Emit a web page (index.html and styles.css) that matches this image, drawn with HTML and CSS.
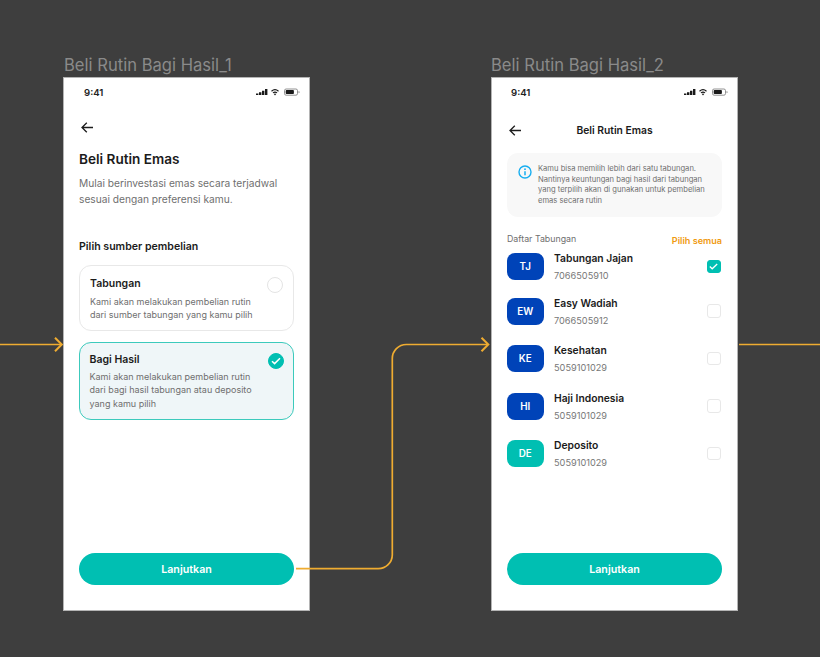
FILE: index.html
```html
<!DOCTYPE html>
<html lang="id">
<head>
<meta charset="utf-8">
<title>Beli Rutin Emas</title>
<link rel="stylesheet" href="styles.css">
</head>
<body>
<div class="canvas">
  <div class="frame-title title-one">Beli Rutin Bagi Hasil_1</div>
  <section class="frame frame-one">
    <div class="status">
      <span class="time">9:41</span>
      <svg class="status-icons" width="45" height="8" viewBox="0 0 45 8"><path d="M0 5.500h2.400V7H0zM3 4.300h2.400V7H3zM6 2.800h2.400V7H6zM9 1h2.400v6H9z" fill="#1a1a1a"/><path d="M15.500 3.200a5.400 5.400 0 0 1 7 0M17 4.900a3.200 3.200 0 0 1 4 0" fill="none" stroke="#1a1a1a" stroke-width="1.200"/><path d="M19 7.400l-1.200-1.300a1.700 1.700 0 0 1 2.400 0z" fill="#1a1a1a"/><rect x="28.500" y="1" width="13" height="6.200" rx="1.600" fill="none" stroke="#777" stroke-width=".8"/><rect x="29.700" y="2.100" width="8.200" height="4" rx=".8" fill="#1a1a1a"/><path d="M42.600 3v2.200c.6-.2 1-.6 1-1.100s-.4-.9-1-1.100z" fill="#777"/></svg>
    </div>
    <svg class="back back-one" width="12" height="11" viewBox="0 0 12 11"><path d="M12 5.500H1M5.800.7 1 5.500l4.800 4.800" fill="none" stroke="#1c1c1c" stroke-width="1.300"/></svg>
    <h1 class="page-title">Beli Rutin Emas</h1>
    <p class="lead">Mulai berinvestasi emas secara terjadwal sesuai dengan preferensi kamu.</p>
    <h2 class="section-title">Pilih sumber pembelian</h2>
    <div class="option">
      <div class="option-copy">
        <h3>Tabungan</h3>
        <p>Kami akan melakukan pembelian rutin<br>dari sumber tabungan yang kamu pilih</p>
      </div>
      <span class="radio"></span>
    </div>
    <div class="option selected">
      <div class="option-copy">
        <h3>Bagi Hasil</h3>
        <p>Kami akan melakukan pembelian rutin<br>dari bagi hasil tabungan atau deposito<br>yang kamu pilih</p>
      </div>
      <span class="radio on"><svg width="10" height="8" viewBox="0 0 10 8"><path d="M1 4.200 3.600 6.600 9 1.200" fill="none" stroke="#fff" stroke-width="1.500"/></svg></span>
    </div>
    <button class="cta">Lanjutkan</button>
  </section>

  <div class="frame-title title-two">Beli Rutin Bagi Hasil_2</div>
  <section class="frame frame-two">
    <div class="status">
      <span class="time">9:41</span>
      <svg class="status-icons" width="45" height="8" viewBox="0 0 45 8"><path d="M0 5.500h2.400V7H0zM3 4.300h2.400V7H3zM6 2.800h2.400V7H6zM9 1h2.400v6H9z" fill="#1a1a1a"/><path d="M15.500 3.200a5.400 5.400 0 0 1 7 0M17 4.900a3.200 3.200 0 0 1 4 0" fill="none" stroke="#1a1a1a" stroke-width="1.200"/><path d="M19 7.400l-1.200-1.300a1.700 1.700 0 0 1 2.400 0z" fill="#1a1a1a"/><rect x="28.500" y="1" width="13" height="6.200" rx="1.600" fill="none" stroke="#777" stroke-width=".8"/><rect x="29.700" y="2.100" width="8.200" height="4" rx=".8" fill="#1a1a1a"/><path d="M42.600 3v2.200c.6-.2 1-.6 1-1.100s-.4-.9-1-1.100z" fill="#777"/></svg>
    </div>
    <header class="nav">
      <svg class="back" width="12" height="11" viewBox="0 0 12 11"><path d="M12 5.500H1M5.800.7 1 5.500l4.800 4.800" fill="none" stroke="#1c1c1c" stroke-width="1.300"/></svg>
      <span class="nav-title">Beli Rutin Emas</span>
    </header>
    <div class="notice">
      <svg class="info" width="14" height="14" viewBox="0 0 14 14"><circle cx="7" cy="7" r="6" fill="none" stroke="#17aef0" stroke-width="1.400"/><path d="M7 6.300v3.900" stroke="#17aef0" stroke-width="1.500"/><circle cx="7" cy="4.200" r=".9" fill="#17aef0"/></svg>
      <p>Kamu bisa memilih lebih dari satu tabungan. Nantinya keuntungan bagi hasil dari tabungan yang terpilih akan di gunakan untuk pembelian emas secara rutin</p>
    </div>
    <div class="list-head">
      <span class="list-label">Daftar Tabungan</span>
      <span class="select-all">Pilih semua</span>
    </div>
    <ul class="accounts">
      <li class="account first">
        <span class="badge">TJ</span>
        <div class="account-copy"><strong>Tabungan Jajan</strong><span>7066505910</span></div>
        <span class="check on"><svg width="9" height="7" viewBox="0 0 9 7"><path d="M.8 3.600 3.200 5.800 8.200 1" fill="none" stroke="#fff" stroke-width="1.300"/></svg></span>
      </li>
      <li class="account">
        <span class="badge">EW</span>
        <div class="account-copy"><strong>Easy Wadiah</strong><span>7066505912</span></div>
        <span class="check"></span>
      </li>
      <li class="account">
        <span class="badge">KE</span>
        <div class="account-copy"><strong>Kesehatan</strong><span>5059101029</span></div>
        <span class="check"></span>
      </li>
      <li class="account">
        <span class="badge">HI</span>
        <div class="account-copy"><strong>Haji Indonesia</strong><span>5059101029</span></div>
        <span class="check"></span>
      </li>
      <li class="account">
        <span class="badge teal">DE</span>
        <div class="account-copy"><strong>Deposito</strong><span>5059101029</span></div>
        <span class="check"></span>
      </li>
    </ul>
    <button class="cta">Lanjutkan</button>
  </section>

  <svg class="wires" width="820" height="657" viewBox="0 0 820 657">
    <g fill="none" stroke="#efac31" stroke-width="1.700">
      <path d="M0 344.500H61"/>
      <path d="M55 337.700l6.800 6.800-6.800 6.800" stroke-width="2"/>
      <path d="M296 568.700H378a14 14 0 0 0 14.300-14V358.500a14 14 0 0 1 14-14H488"/>
      <path d="M481.500 337.700l6.800 6.800-6.800 6.800" stroke-width="2"/>
      <path d="M739 344.500H820"/>
    </g>
  </svg>
</div>
</body>
</html>
```

FILE: styles.css
```css
* { box-sizing: border-box; }
html, body { margin: 0; padding: 0; }
body { background: #3e3e3e; font-family: "Inter", "Liberation Sans", sans-serif; overflow: hidden; }
.canvas { position: relative; width: 820px; height: 657px; overflow: hidden; background: #3e3e3e; }
.frame-title { position: absolute; top: 55px; font-size: 16.600px; line-height: 20px; color: #8a8a8a; white-space: nowrap; }
.title-one { left: 64px; }
.title-two { left: 491px; }
.frame { position: absolute; top: 77px; width: 247px; height: 534px; background: #fff; display: flex; flex-direction: column; padding: 0 15px 25px; border: 1px solid #b4b4b4; color: #1b1b1b; }
.frame-one { left: 63px; }
.frame-two { left: 491px; }
.status { display: flex; justify-content: space-between; align-items: center; height: 10px; margin: 9px -7px 0 5px; }
.frame-two .status { margin-left: 4px; }
.time { font-size: 9.600px; font-weight: 600; color: #222; }
.status-icons { display: block; }
.back { display: block; flex: none; }
.back-one { margin-top: 25px; margin-left: 2px; }
.page-title { margin: 17px 0 0; font-size: 13.600px; line-height: 18px; font-weight: 600; }
.lead { margin: 8.250px 0 0; font-size: 10.200px; line-height: 15.500px; color: #6f6f6f; }
.section-title { margin: 32.750px 0 0; font-size: 10.600px; line-height: 14px; font-weight: 600; }
.option { margin-top: 11px; flex: none; display: flex; justify-content: space-between; border: 1px solid #e8e8e8; border-radius: 12px; padding: 10.500px 10px 0; height: 66px; }
.selected { margin-top: 11px; height: 78px; padding: 9.500px 9.500px 0; background: #eff6f8; border: 1.500px solid #3ccabc; }
.option h3 { margin: 0; font-size: 10.500px; line-height: 14px; font-weight: 600; }
.option p { margin: 4.500px 0 0; font-size: 9px; line-height: 13.300px; color: #6f6f6f; white-space: nowrap; }
.selected p { margin-top: 3.500px; }
.radio { flex: none; width: 16px; height: 16px; border-radius: 50%; border: 1px solid #e4e4e4; display: flex; align-items: center; justify-content: center; background: #fff; }
.radio.on { background: #00bfb2; border-color: #00bfb2; }
.cta { margin-top: auto; flex: none; width: 215px; height: 32px; border: 0; border-radius: 16px; background: #00bfb2; color: #fff; font-family: inherit; font-size: 10.700px; font-weight: 600; }
.nav { display: flex; align-items: center; height: 14px; margin-top: 26px; position: relative; }
.nav .back { margin-left: 2px; }
.nav-title { flex: 1; text-align: center; font-size: 10.300px; font-weight: 600; margin-right: 14px; }
.notice { margin-top: 16px; width: 215px; height: 64px; background: #f8f8f8; border-radius: 11px; display: flex; gap: 6px; padding: 11px 8px 0 11px; }
.info { flex: none; margin-top: 1px; }
.notice p { margin: 0; font-size: 7.600px; line-height: 10.700px; color: #6f6f6f; }
.list-head { display: flex; justify-content: space-between; align-items: flex-end; margin-top: 13px; height: 14px; }
.list-label { font-size: 8.800px; color: #6f6f6f; }
.select-all { font-size: 9.100px; font-weight: 600; color: #f09a10; margin-bottom: -2px; }
.accounts { list-style: none; margin: 0; padding: 0; display: flex; flex-direction: column; }
.account { display: flex; align-items: center; height: 47.500px; flex: none; }
.account.first { height: 34px; margin-bottom: 3.750px; margin-top: 5.500px; }
.badge { flex: none; width: 36.500px; height: 27px; border-radius: 8px; background: #0043b8; color: #fff; font-size: 9.800px; font-weight: 600; display: flex; align-items: center; justify-content: center; }
.badge.teal { background: #00bfb2; }
.account-copy { flex: 1; display: flex; flex-direction: column; gap: 5px; margin-left: 10.500px; }
.account-copy strong { font-size: 10.300px; line-height: 13px; font-weight: 600; }
.account-copy span { font-size: 9.200px; line-height: 11px; color: #777; }
.check { flex: none; width: 13.500px; height: 13.500px; margin-right: 1.500px; border-radius: 3px; border: 1px solid #e8e8e8; display: flex; align-items: center; justify-content: center; }
.check.on { background: #00bfb2; border-color: #00bfb2; }
.wires { position: absolute; left: 0; top: 0; pointer-events: none; }
```
